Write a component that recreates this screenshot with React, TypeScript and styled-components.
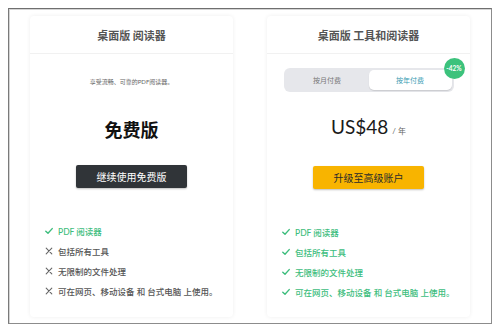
import styled, { createGlobalStyle } from "styled-components";

const GlobalStyle = createGlobalStyle`
  html, body {
    margin: 0;
    padding: 0;
    background: #ffffff;
  }
  body {
    font-family: "Lato", "Noto Sans CJK SC", sans-serif;
    color: #333;
  }
`;

interface Feature {
  text: string;
  ok: boolean;
}

const freeFeatures: Feature[] = [
  { text: "PDF 阅读器", ok: true },
  { text: "包括所有工具", ok: false },
  { text: "无限制的文件处理", ok: false },
  { text: "可在网页、移动设备 和 台式电脑 上使用。", ok: false },
];

const proFeatures: Feature[] = [
  { text: "PDF 阅读器", ok: true },
  { text: "包括所有工具", ok: true },
  { text: "无限制的文件处理", ok: true },
  { text: "可在网页、移动设备 和 台式电脑 上使用。", ok: true },
];

const CheckIcon = () => (
  <svg width="8" height="8" viewBox="0 0 8 8">
    <polyline
      points="0.8,4.2 3,6.3 7.2,1.6"
      fill="none"
      stroke="#3dbd7d"
      strokeWidth="1.4"
      strokeLinecap="round"
      strokeLinejoin="round"
    />
  </svg>
);

const CrossIcon = () => (
  <svg width="8" height="8" viewBox="0 0 8 8">
    <path
      d="M1.2 1.2 L6.8 6.8 M6.8 1.2 L1.2 6.8"
      fill="none"
      stroke="#666"
      strokeWidth="1.1"
      strokeLinecap="round"
    />
  </svg>
);

const FeatureList = ({ items }: { items: Feature[] }) => (
  <List>
    {items.map((f) => (
      <Item key={f.text} $ok={f.ok}>
        <IconBox>{f.ok ? <CheckIcon /> : <CrossIcon />}</IconBox>
        {f.text}
      </Item>
    ))}
  </List>
);

const App = () => {
  return (
    <>
      <GlobalStyle />
      <Frame>
        <Card>
          <Header>桌面版 阅读器</Header>
          <Body>
            <Subtitle>享受流畅、可靠的PDF阅读器。</Subtitle>
            <PlanName>免费版</PlanName>
            <Button $variant="dark">继续使用免费版</Button>
            <FeatureList items={freeFeatures} />
          </Body>
        </Card>
        <Card>
          <Header>桌面版 工具和阅读器</Header>
          <Body>
            <Toggle>
              <Tab>按月付费</Tab>
              <Tab $active>按年付费</Tab>
              <Badge>-42%</Badge>
            </Toggle>
            <Price>
              US$48<Per>/ 年</Per>
            </Price>
            <Button $variant="yellow">升级至高级账户</Button>
            <FeatureList items={proFeatures} />
          </Body>
        </Card>
      </Frame>
    </>
  );
};

const Frame = styled.div`
  margin: 8px 0 0 8px;
  width: 484px;
  height: 316px;
  box-sizing: border-box;
  border: 1px solid #8c8c8c;
  border-top-color: #6f6f6f;
  border-left-color: #7a7a7a;
  box-shadow: inset 1px 1px 0 #d4d4d4;
  display: flex;
  gap: 34px;
  padding: 7px 21px 6px 21px;
`;

const Card = styled.div`
  flex: 0 0 203px;
  display: flex;
  flex-direction: column;
  background: #fff;
  border-radius: 4px;
  box-shadow: 0 0 4px rgba(0, 0, 0, 0.07);
`;

const Header = styled.div`
  height: 37px;
  display: flex;
  align-items: center;
  justify-content: center;
  border-bottom: 1px solid #f1f1f1;
  font-size: 11px;
  font-weight: 700;
  color: #555;
`;

const Body = styled.div`
  flex: 1;
  display: flex;
  flex-direction: column;
  align-items: center;
`;

const Subtitle = styled.div`
  margin-top: 23px;
  font-size: 6px;
  line-height: 9px;
  color: #666;
`;

const PlanName = styled.div`
  margin-top: 31px;
  font-size: 18px;
  line-height: 26px;
  font-weight: 700;
  color: #111;
`;

const Toggle = styled.div`
  position: relative;
  margin-top: 14px;
  width: 170px;
  height: 24px;
  box-sizing: border-box;
  padding: 2px;
  border-radius: 6px;
  background: #e6e7eb;
  display: flex;
`;

const Tab = styled.div<{ $active?: boolean }>`
  flex: 1;
  display: flex;
  align-items: center;
  justify-content: center;
  border-radius: 5px;
  font-size: 7px;
  color: ${(p) => (p.$active ? "#3a9db3" : "#777")};
  background: ${(p) => (p.$active ? "#fff" : "transparent")};
  box-shadow: ${(p) => (p.$active ? "0 1px 1px rgba(0,0,0,0.12)" : "none")};
`;

const Badge = styled.div`
  position: absolute;
  right: -11px;
  top: -10px;
  width: 21px;
  height: 21px;
  border-radius: 50%;
  background: #3cc27c;
  color: #fff;
  font-size: 6.5px;
  font-weight: 700;
  display: flex;
  align-items: center;
  justify-content: center;
`;

const Price = styled.div`
  margin-top: 22px;
  font-size: 19px;
  line-height: 26px;
  color: #1a1a1a;
  display: flex;
  align-items: baseline;
`;

const Per = styled.span`
  margin-left: 4px;
  font-size: 8px;
  color: #666;
`;

const Button = styled.div<{ $variant: "dark" | "yellow" }>`
  margin-top: 22px;
  width: 111px;
  height: 23px;
  display: flex;
  align-items: center;
  justify-content: center;
  border-radius: 2px;
  font-size: 10px;
  background: ${(p) => (p.$variant === "dark" ? "#303438" : "#f8b400")};
  color: ${(p) => (p.$variant === "dark" ? "#fff" : "#2b2b2b")};
  box-shadow: 0 1px 2px rgba(0, 0, 0, 0.25);
`;

const List = styled.div`
  align-self: stretch;
  margin-top: 33px;
  padding-left: 15px;
  display: flex;
  flex-direction: column;
`;

const Item = styled.div<{ $ok: boolean }>`
  height: 20px;
  display: flex;
  align-items: center;
  font-size: 8.5px;
  font-weight: 500;
  color: ${(p) => (p.$ok ? "#3dbd7d" : "#555")};
`;

const IconBox = styled.span`
  width: 13px;
  display: flex;
  align-items: center;
`;

export default App;
